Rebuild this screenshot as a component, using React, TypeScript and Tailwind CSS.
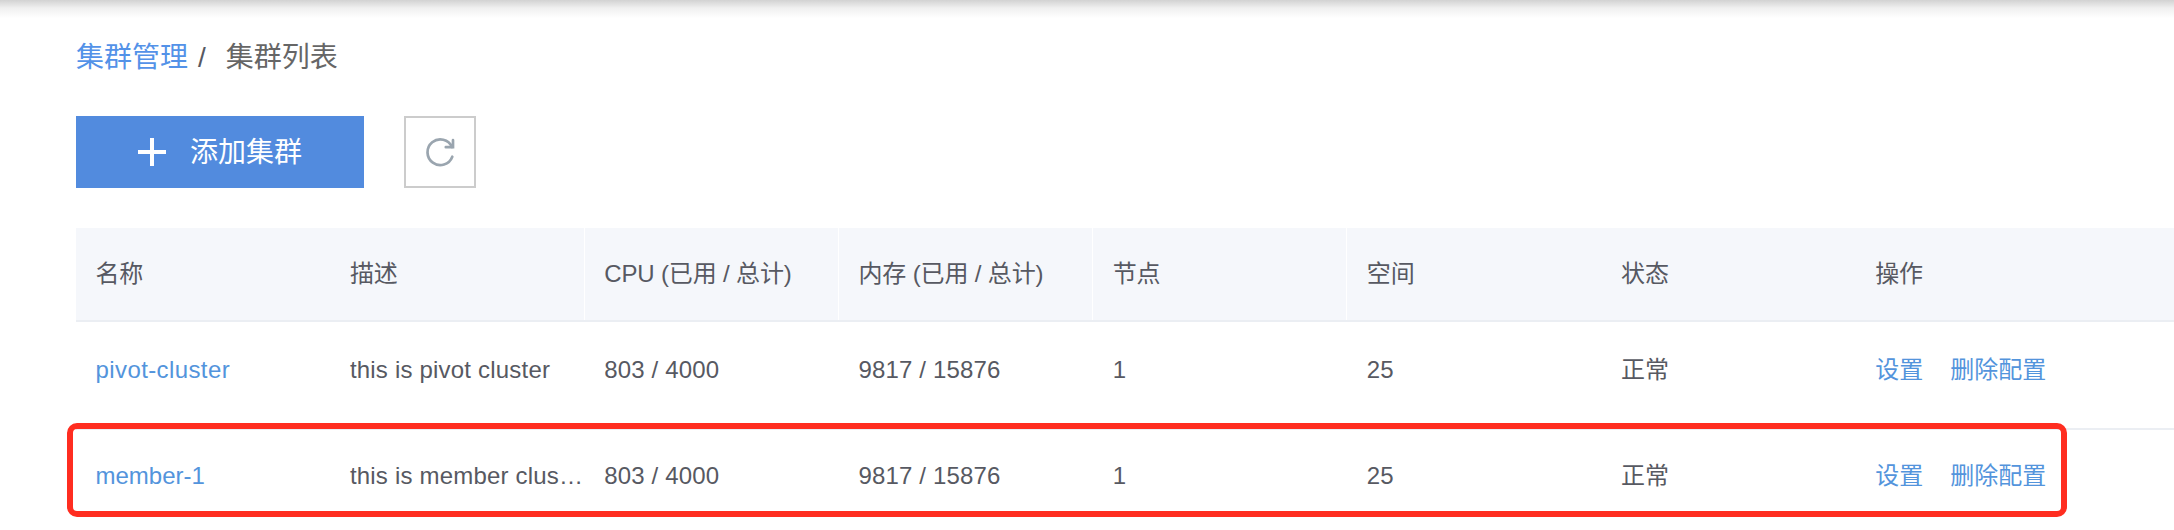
const headers = ["名称", "描述", "CPU (已用 / 总计)", "内存 (已用 / 总计)", "节点", "空间", "状态", "操作"];
const divided = [false, true, true, true, true, false, false, false];

const clusters = [
  { name: "pivot-cluster", desc: "this is pivot cluster", cpu: "803 / 4000", mem: "9817 / 15876", nodes: "1", spaces: "25", status: "正常", pad: "pb-2.5" },
  { name: "member-1", desc: "this is member clus…", cpu: "803 / 4000", mem: "9817 / 15876", nodes: "1", spaces: "25", status: "正常", pad: "pb-4" },
];

const columns = "grid grid-cols-[254.4px_254.4px_repeat(5,254.2px)_1fr]";

export default function App() {
  return (
    <div className="relative h-[530px] w-full overflow-hidden bg-white font-['Liberation_Sans','Noto_Sans_CJK_SC',sans-serif] text-[#575962]">
      <div className="absolute inset-x-0 top-0 h-[18px] bg-linear-to-b from-[#d2d2d2] via-[#f0f0f0] via-45% to-white" />
      <div className="pl-[76px]">
        <nav className="flex h-[116px] items-center pb-px text-[28px] leading-none whitespace-pre">
          <a className="text-[#5392e8]">集群管理</a>
          <span className="ml-2.5">/</span>
          <span className="ml-5 text-[#666]">集群列表</span>
        </nav>
        <div className="flex gap-10">
          <button className="flex h-[72px] w-72 items-center bg-[#528bde] pl-[62px] text-[28px] leading-none text-white">
            <svg className="mr-6 size-7" viewBox="0 0 28 28" stroke="currentColor" strokeWidth="4">
              <path d="M14 0v28M0 14h28" />
            </svg>
            <span className="pt-0.5">添加集群</span>
          </button>
          <button className="flex size-[72px] items-center justify-center border-2 border-[#ccc] text-[#9aa5af]">
            <svg className="size-7 overflow-visible" viewBox="0 0 28 28" fill="none" stroke="currentColor" strokeWidth="2.7" strokeLinecap="round">
              <path d="M26.3 18.7A12.8 12.8 0 1 1 26 9" />
              <path d="M27 2.2v7h-7.2" />
            </svg>
          </button>
        </div>
        <div className="mt-10 text-[24px] leading-none">
          <div className={`${columns} h-[94px] border-b-2 border-[#ebeef3] bg-[#f5f7fb] tracking-[-0.15px]`}>
            {headers.map((h, i) => (
              <div key={h} className={`flex items-center pl-[19.5px] whitespace-nowrap ${divided[i] ? "border-r border-white" : ""}`}>{h}</div>
            ))}
          </div>
          {clusters.map((c) => (
            <div key={c.name} className={`${columns} ${c.pad} h-[108px] items-center border-b-2 border-[#ebeef3] leading-[34px] tracking-[0.15px] last:border-0`}>
              <a className={`pl-[19.5px] text-[#5394dc] ${c.name.length > 10 ? "tracking-[0.4px]" : "tracking-normal"}`}>{c.name}</a>
              <div className="pl-[19.5px] tracking-[0.2px] whitespace-nowrap">{c.desc}</div>
              <div className="pl-[19.5px]">{c.cpu}</div>
              <div className="pl-[19.5px]">{c.mem}</div>
              <div className="pl-[19.5px]">{c.nodes}</div>
              <div className="pl-[19.5px]">{c.spaces}</div>
              <div className="pl-[19.5px] tracking-normal">{c.status}</div>
              <div className="flex gap-[27px] pl-[19.5px] tracking-normal text-[#5394dc]">
                <a>设置</a>
                <a>删除配置</a>
              </div>
            </div>
          ))}
        </div>
      </div>
      <div className="absolute top-[423px] left-[67px] h-[94px] w-[2000px] rounded-[10px] border-6 border-[#ff2d20]" />
    </div>
  );
}
